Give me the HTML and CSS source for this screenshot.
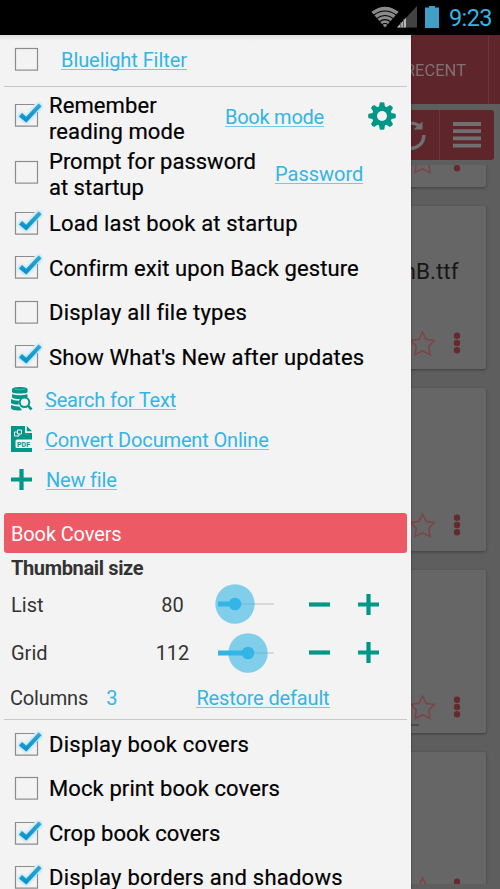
FILE: index.html
```html
<!DOCTYPE html>
<html lang="en">
<head>
<meta charset="utf-8">
<title>Reader options</title>
<link rel="stylesheet" href="styles.css">
</head>
<body>
<svg class="defs" aria-hidden="true">
  <defs>
    <linearGradient id="ink" x1="0" y1="0" x2="0" y2="1"><stop offset="0" stop-color="#2fa8d6"/><stop offset="1" stop-color="#0590c8"/></linearGradient>
    <filter id="glow" x="-50%" y="-50%" width="200%" height="200%"><feGaussianBlur stdDeviation="1.8"/></filter>
    <symbol id="off" viewBox="0 0 32 32"><rect x="4.500" y="5.500" width="22" height="21.600" fill="none" stroke="#8c8c8c" stroke-width="1.200"/></symbol>
    <symbol id="on" viewBox="0 0 32 32">
      <path d="M23.500 5.500H4.500V27.100H26.500V13" fill="none" stroke="#8c8c8c" stroke-width="1.200"/>
      <path d="M8 17.500 10.800 14.600 15.300 18.500 27.800 4.800 30.500 7.300 15.400 23.500Z" fill="#6fd0f5" stroke="#6fd0f5" stroke-width="2" opacity=".65" filter="url(#glow)"/>
      <path d="M8 17.400 11 14.100 15.200 17.700 27.600 4.400 30.500 7.300 15.300 23.400Z" fill="url(#ink)"/>
    </symbol>
    <symbol id="plus" viewBox="0 0 21 21"><path d="M0 10.500H21M10.500 0V21" stroke="#009688" stroke-width="4.200"/></symbol>
    <symbol id="minus" viewBox="0 0 21 21"><path d="M0 10.500H21" stroke="#009688" stroke-width="4.200"/></symbol>
    <symbol id="star" viewBox="0 0 26 26"><path d="M12.500 2 15.900 9.200 24.200 10.500 18.700 16.200 20 24.500 12.500 20.800 5 24.500 6.300 16.200.8 10.500 9.100 9.200Z" fill="none" stroke="#7c4448" stroke-width="1.500"/></symbol>
    <symbol id="dots" viewBox="0 0 8 24"><g fill="#662a2e"><circle cx="4" cy="4.700" r="3.200"/><circle cx="4" cy="12" r="3.200"/><circle cx="4" cy="19.300" r="3.200"/></g></symbol>
  </defs>
</svg>

<header class="status">
  <svg class="wifi" viewBox="0 0 28 22"><path d="M14 21.500 0.300 5.800Q14-4.500 27.700 5.800Z" fill="#8a8a8a"/><g fill="none" stroke="#000" stroke-width="1.100"><path d="M2.500 9.300Q14 .8 25.500 9.300M5.500 12.600Q14 6.400 22.500 12.600M8.300 15.700Q14 11.500 19.700 15.700M10.900 18.600Q14 16.500 17.100 18.600"/></g></svg>
  <svg class="signal" viewBox="0 0 20 22"><path d="M0 21.500 20 0V21.500Z" fill="#424242"/><path d="M0 21.500 9 11.800V21.500Z" fill="#b8b8b8"/><path d="M3.800 16V22M6.400 13V22" stroke="#555"/></svg>
  <svg class="battery" viewBox="0 0 14 22"><path d="M4 0H10V1.500H14V22H0V1.500H4Z" fill="#409fc7"/></svg>
  <span class="clock">9:23</span>
</header>

<main class="stage">
  <section class="library">
    <nav class="tabs"><span class="tab">RECENT</span><span class="tab-next"></span></nav>
    <div class="tools">
      <span class="tool refresh"><svg width="34" height="34" viewBox="0 0 34 34"><path d="M29.800 17A12.500 12.500 0 1 1 24.600 7.500" fill="none" stroke="#707070" stroke-width="3.400"/><path d="M28.500 3.500V11.500H19.500Z" fill="#707070"/></svg></span>
      <span class="tool menu"><svg width="28" height="26" viewBox="0 0 28 26"><path d="M0 2H28M0 9.200H28M0 16.400H28M0 23.600H28" stroke="#707070" stroke-width="3.800"/></svg></span>
    </div>
    <div class="cards">
      <article class="card"><footer><svg class="star"><use href="#star"/></svg><svg class="dots"><use href="#dots"/></svg></footer></article>
      <article class="card"><h3>nB.ttf</h3><footer><svg class="star"><use href="#star"/></svg><svg class="dots"><use href="#dots"/></svg></footer></article>
      <article class="card"><footer><svg class="star"><use href="#star"/></svg><svg class="dots"><use href="#dots"/></svg></footer></article>
      <article class="card"><footer><svg class="star"><use href="#star"/></svg><svg class="dots"><use href="#dots"/></svg></footer><i class="progress"></i></article>
      <article class="card"><footer><svg class="star"><use href="#star"/></svg><svg class="dots"><use href="#dots"/></svg></footer></article>
    </div>
  </section>

  <aside class="drawer">
    <div class="row filter"><svg class="box"><use href="#off"/></svg><a class="link t-filter">Bluelight Filter</a></div>
    <div class="row tall"><svg class="box"><use href="#on"/></svg><span class="label two"><span class="t-rem">Remember</span><br><span class="t-read">reading mode</span></span><a class="link t-mode">Book mode</a>
      <svg class="gear" viewBox="-14 -14 28 28"><g fill="#009688"><g id="teeth"><path id="tooth" d="M-3.300-8-2.200-13.400Q0-14.300 2.200-13.400L3.300-8V8L2.200 13.400Q0 14.300-2.200 13.400L-3.300 8Z"/><use href="#tooth" transform="rotate(90)"/></g><use href="#teeth" transform="rotate(45)"/><circle r="10"/></g><circle r="5" fill="#f3f3f3"/></svg></div>
    <div class="row tall second"><svg class="box"><use href="#off"/></svg><span class="label two"><span class="t-prompt">Prompt for password</span><br><span class="t-at">at startup</span></span><a class="link t-pass">Password</a></div>
    <div class="row"><svg class="box"><use href="#on"/></svg><span class="label t-load">Load last book at startup</span></div>
    <div class="row"><svg class="box"><use href="#on"/></svg><span class="label t-confirm">Confirm exit upon Back gesture</span></div>
    <div class="row"><svg class="box"><use href="#off"/></svg><span class="label t-types">Display all file types</span></div>
    <div class="row"><svg class="box"><use href="#on"/></svg><span class="label t-news">Show What's New after updates</span></div>

    <div class="action"><svg class="ico" viewBox="0 0 22 26"><g fill="#009688"><path d="M1 3.200C1 .2 16.500.2 16.500 3.200V6C16.500 8 1 8 1 6Z"/><path d="M1 8.200Q8.500 10.500 16.500 8.200V11L9 13Q3 13 1 11.500Z"/><path d="M0 13Q3 15 8 14.800L7.500 18.800Q2 18.500 0 17Z"/><path d="M0 19Q3 20.600 8.300 20.400L11 24.300Q1.500 25 0 22.500Z"/></g><path d="M3.500 3.200Q8.500 4.500 14 3.200" fill="none" stroke="#5bb8af" stroke-width=".8"/><circle cx="13.500" cy="16.300" r="4.800" fill="#f3f3f3" stroke="#009688" stroke-width="2"/><path d="M17 19.700 20.500 23.500" stroke="#009688" stroke-width="2.600"/></svg><a class="link t-search">Search for Text</a></div>
    <div class="action"><svg class="ico" viewBox="0 0 22 26"><path d="M0 0H14V7H21V26H0Z" fill="#009688"/><path d="M15.800 0 21 5.200H15.800Z" fill="#009688"/><path d="M6.500 4H10.500V8H6.500ZM6.500 6H3.500V10H8V8" fill="none" stroke="#f3f3f3" stroke-width="1"/><rect x="4.500" y="13.500" width="17.500" height="8.500" rx="1.500" fill="#f3f3f3"/><text x="6" y="20.600" class="pdf" textLength="13" lengthAdjust="spacingAndGlyphs">PDF</text></svg><a class="link t-convert">Convert Document Online</a></div>
    <div class="action"><svg class="ico-plus"><use href="#plus"/></svg><a class="link t-new">New file</a></div>

    <h2 class="section"><span class="t-covers">Book Covers</span></h2>
    <h3 class="sub"><span class="t-thumb">Thumbnail size</span></h3>
    <div class="size"><span class="name t-list">List</span><span class="value"><span class="t-80">80</span></span>
      <svg class="slider" viewBox="0 0 64 42"><path d="M4 21H60" stroke="#d0d0d0" stroke-width="1.400"/><circle cx="21" cy="21" r="19.700" fill="#33b5e5" opacity=".6"/><path d="M4 21H21" stroke="#33b5e5" stroke-width="5"/><circle cx="21" cy="21" r="6.300" fill="#33b5e5"/></svg>
      <svg class="step"><use href="#minus"/></svg><svg class="step"><use href="#plus"/></svg></div>
    <div class="size"><span class="name t-grid">Grid</span><span class="value"><span class="t-112">112</span></span>
      <svg class="slider" viewBox="0 0 64 42"><path d="M4 21H60" stroke="#d0d0d0" stroke-width="1.400"/><circle cx="34" cy="21" r="19.700" fill="#33b5e5" opacity=".6"/><path d="M4 21H34" stroke="#33b5e5" stroke-width="5"/><circle cx="34" cy="21" r="6.300" fill="#33b5e5"/></svg>
      <svg class="step"><use href="#minus"/></svg><svg class="step"><use href="#plus"/></svg></div>
    <div class="columns"><span class="t-columns">Columns</span><b>3</b><a class="link t-restore">Restore default</a></div>

    <div class="row"><svg class="box"><use href="#on"/></svg><span class="label t-display">Display book covers</span></div>
    <div class="row"><svg class="box"><use href="#off"/></svg><span class="label t-mock">Mock print book covers</span></div>
    <div class="row"><svg class="box"><use href="#on"/></svg><span class="label t-crop">Crop book covers</span></div>
    <div class="row"><svg class="box"><use href="#on"/></svg><span class="label t-borders">Display borders and shadows</span></div>
  </aside>
</main>
</body>
</html>
```
FILE: styles.css
```css
* { box-sizing: border-box; }
body {
  margin: 0; width: 500px; height: 889px; overflow: hidden;
  font-family: Roboto, "Liberation Sans", sans-serif; background: #5e5e5e;
  font-size: 20px; color: #333;
}
svg { display: block; flex: none; }
.defs { position: absolute; width: 0; height: 0; }

.status { height: 35px; background: #000; display: flex; align-items: flex-start; padding: 6px 0 0 371px; }
.wifi { width: 28px; height: 22px; }
.signal { width: 20px; height: 22px; margin-left: -2px; }
.battery { width: 14px; height: 22px; margin-left: 8px; }
.clock { color: #33b5e5; font-size: 23.500px; letter-spacing: -.6px; line-height: 24px; margin-left: 10px; white-space: nowrap; }

.stage { position: relative; height: 854px; overflow: hidden; }

.library { height: 854px; background: #5e5e5e; }
.tabs { height: 69px; background: #5e262a; display: flex; justify-content: flex-end; align-items: stretch; }
.tab { color: #858080; opacity: .85; font-size: 16.5px; line-height: 71px; padding-right: 22px; }
.tab-next { width: 12px; border-left: 1px solid #713136; }
.tools { height: 50px; width: 95px; margin: 6px 0 0 399px; background: #5e262a; border-radius: 3px; display: flex; }
.tool { display: flex; align-items: center; }
.refresh { width: 41px; border-right: 1px solid #713136; justify-content: flex-end; padding-right: 11px; }
.menu { flex: 1; justify-content: center; }
.cards { height: 719px; margin-top: 5px; overflow: hidden; display: flex; flex-direction: column; gap: 19px; }
.card {
  flex: none; width: 100px; height: 163px; margin-left: 386px; background: #666; border-radius: 2px;
  box-shadow: 0 1px 3px rgba(0,0,0,.35); display: flex; flex-direction: column; justify-content: flex-end;
}
.card:first-child { margin-top: -141px; }
.card h3 { margin: 0 27.500px 46px 0; font-weight: 400; font-size: 22.500px; line-height: 26px; color: #161616; display: flex; justify-content: flex-end; }
.card footer { display: flex; align-items: center; margin: 0 0 13px 24px; height: 26px; }
.star { width: 26px; height: 26px; }
.dots { width: 8px; height: 24px; margin-left: 17px; }
.card:has(.progress) footer { margin-bottom: 4px; }
.progress { display: block; width: 33px; height: 2px; background: #4b4b4b; margin-bottom: 7px; }

.drawer {
  position: absolute; left: 0; top: 0; width: 411px; height: 854px; overflow: hidden;
  background: linear-gradient(#dcdcdc, #f3f3f3 6px); box-shadow: 0 0 2px rgba(0,0,0,.5);
}
.row { height: 44.500px; display: flex; align-items: center; padding-left: 11px; }
.box { width: 32px; height: 32px; margin-top: -1px; }
.label { font-size: 22px; line-height: 26.500px; color: #000; margin: 2px 0 0 6px; white-space: nowrap; -webkit-text-stroke: .2px #000; }
.link { color: #33b5e5; border-bottom: 1.500px solid #6fcaec; line-height: 20px; padding-top: 2px; height: 22px; margin-top: -1px; white-space: nowrap; }
.filter { height: 52px; margin: 0 4px; padding: 0 0 2px 7px; border-bottom: 1.500px solid #c8c8c8; }
.filter .link { margin-left: 18px; letter-spacing: -.08px; }
.tall { height: 58px; }
.tall .box { margin-top: -2px; }
.tall .two { width: 170px; margin-top: 5px; line-height: 26px; }
.tall.second { height: 56px; }
.tall.second .two { width: 220px; margin-top: 4px; }
.gear { width: 28px; height: 28px; margin-left: 44px; }
.t-mode, .t-pass { margin-left: 6px; }
.t-mode { letter-spacing: -.25px; }
.t-mode + .gear { margin-left: 44px; }
.t-rem, .t-read { letter-spacing: .1px; }
.t-load { letter-spacing: .17px; }
.t-confirm { letter-spacing: .1px; }
.t-types { letter-spacing: .23px; }
.t-news { letter-spacing: .18px; }
.t-display { letter-spacing: .25px; }
.t-mock { letter-spacing: .1px; }
.t-crop { letter-spacing: .03px; }
.t-borders { letter-spacing: .24px; }

.action { height: 40.300px; display: flex; align-items: center; padding-left: 11px; gap: 12px; }
.ico { width: 22px; height: 26px; }
.ico-plus { width: 21px; height: 21px; margin-right: 2px; }
.pdf { font: 700 8px Roboto, sans-serif; fill: #009688; }
.t-search { letter-spacing: -.21px; }
.t-convert { letter-spacing: -.16px; }
.t-new { letter-spacing: -.2px; }

.section { margin: 13px 4px 0; height: 40px; border-radius: 3px; background: #ec5a65; color: #fff; font-weight: 400; font-size: 20px; line-height: 42px; padding-left: 7px; }
.t-covers { letter-spacing: -.13px; }
.sub { margin: 0; padding-left: 11px; font-size: 20px; font-weight: 700; line-height: 30px; height: 27px; }
.t-thumb { letter-spacing: -.36px; }
.size { height: 48.500px; display: flex; align-items: center; padding-left: 11px; }
.name { width: 110px; padding-top: 1px; }
.value { width: 103px; padding-top: 1px; text-align: center; }
.slider { width: 64px; height: 42px; margin-left: -10px; }
.step { width: 21px; height: 21px; margin-left: 31px; }
.step + .step { margin-left: 28px; }
.columns { margin: 0 4px 2px; height: 43px; border-bottom: 1.500px solid #c8c8c8; display: flex; align-items: center; padding-left: 6px; }
.t-columns { letter-spacing: -.15px; }
.columns b { color: #33b5e5; font-weight: 400; margin-left: 18px; }
.t-restore { margin-left: 79px; letter-spacing: -.15px; }
```
